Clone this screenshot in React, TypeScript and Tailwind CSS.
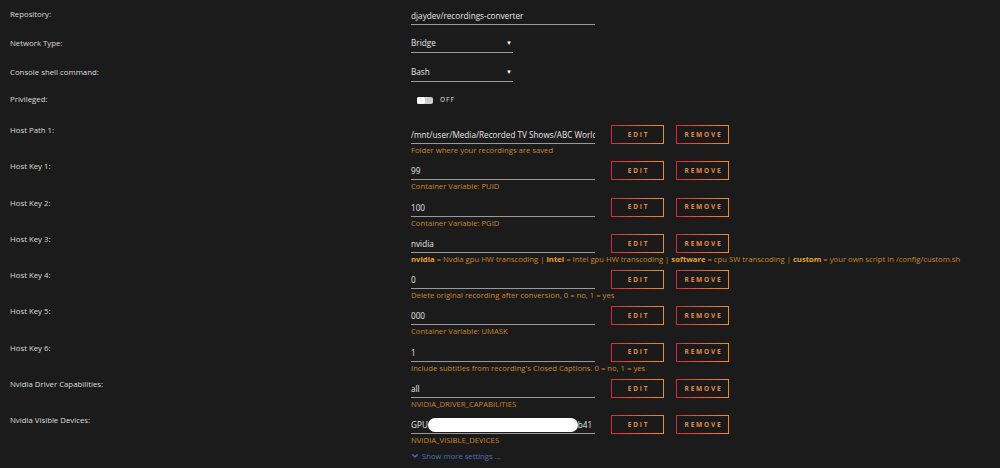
import { ReactNode } from 'react';

interface HostRow {
  label: string;
  value: string;
  hint: ReactNode;
  masked?: boolean;
}

const font = "font-['Open_Sans',_'Liberation_Sans',_sans-serif]";

function B({ children }: { children: ReactNode }) {
  return <span className="font-bold text-[#e4a030]">{children}</span>;
}

const rows: HostRow[] = [
  { label: 'Host Path 1:', value: '/mnt/user/Media/Recorded TV Shows/ABC World News Tonight', hint: 'Folder where your recordings are saved' },
  { label: 'Host Key 1:', value: '99', hint: 'Container Variable: PUID' },
  { label: 'Host Key 2:', value: '100', hint: 'Container Variable: PGID' },
  {
    label: 'Host Key 3:',
    value: 'nvidia',
    hint: (
      <>
        <B>nvidia</B> = Nvdia gpu HW transcoding | <B>intel</B> = Intel gpu HW transcoding | <B>software</B> = cpu SW transcoding | <B>custom</B> = your own script in /config/custom.sh
      </>
    ),
  },
  { label: 'Host Key 4:', value: '0', hint: 'Delete original recording after conversion, 0 = no, 1 = yes' },
  { label: 'Host Key 5:', value: '000', hint: 'Container Variable: UMASK' },
  { label: 'Host Key 6:', value: '1', hint: "Include subtitles from recording's Closed Captions. 0 = no, 1 = yes" },
  { label: 'Nvidia Driver Capabilities:', value: 'all', hint: 'NVIDIA_DRIVER_CAPABILITIES' },
  { label: 'Nvidia Visible Devices:', value: '', hint: 'NVIDIA_VISIBLE_DEVICES', masked: true },
];

function GradButton({ children }: { children: ReactNode }) {
  return (
    <div className="h-[19px] w-[53px] bg-gradient-to-r from-[#d4283a] to-[#f08a30] p-[1px]">
      <div className="flex h-full w-full items-center justify-center bg-[#1b1a1a] pl-[2px] text-[6.5px] font-bold tracking-[1.8px] text-[#e08a4a]">
        {children}
      </div>
    </div>
  );
}

function Label({ children }: { children: ReactNode }) {
  return <div className="w-[411px] shrink-0 pl-[10px] text-[7.8px] text-[#dcdcdc]">{children}</div>;
}

function Field({ value, width = 'w-[184px]' }: { value: string; width?: string }) {
  return (
    <input
      readOnly
      value={value}
      className={`h-[20px] ${width} shrink-0 border-b border-[#9a9a9a] bg-transparent pt-[2px] text-[8.2px] text-[#e4e4e4] outline-none`}
    />
  );
}

export default function App() {
  return (
    <div className={`h-[468px] w-[1000px] overflow-hidden bg-[#1c1b1b] ${font}`}>
      {/* Repository */}
      <div className="flex h-[29px] items-center">
        <Label>Repository:</Label>
        <Field value="djaydev/recordings-converter" />
      </div>

      {/* Network Type */}
      <div className="flex h-[29px] items-center">
        <Label>Network Type:</Label>
        <div className="flex h-[19px] w-[102px] items-center justify-between border-b border-[#9a9a9a] pr-[1px] text-[8.2px] text-[#e4e4e4]">
          Bridge
          <span className="text-[6px] text-white">▼</span>
        </div>
      </div>

      {/* Console shell */}
      <div className="flex h-[29px] items-center">
        <Label>Console shell command:</Label>
        <div className="flex h-[19px] w-[102px] items-center justify-between border-b border-[#9a9a9a] pr-[1px] text-[8.2px] text-[#e4e4e4]">
          Bash
          <span className="text-[6px] text-white">▼</span>
        </div>
      </div>

      {/* Privileged */}
      <div className="mb-[9px] flex h-[26px] items-center">
        <Label>Privileged:</Label>
        <div className="flex items-center gap-[7px] pl-[6px]">
          <div className="flex h-[7px] w-[16px] items-center rounded-[2px] bg-[#cfcfcf]">
            <div className="h-[7px] w-[8px] rounded-[2px] bg-white" />
          </div>
          <span className="text-[6.5px] font-semibold tracking-[1px] text-[#bdbdbd]">OFF</span>
        </div>
      </div>

      {/* Host rows */}
      {rows.map(row => (
        <div key={row.label} className="flex h-[36.3px]">
          <div className="pt-[3px]">
            <Label>{row.label}</Label>
          </div>
          <div className="flex flex-col pt-[2px]">
            <div className="flex items-start">
              {row.masked ? (
                <div className="flex h-[20px] w-[184px] shrink-0 items-center border-b border-[#9a9a9a] pt-[2px] text-[8.2px] text-[#e4e4e4]">
                  GPU
                  <span className="inline-block h-[14px] w-[150px] rounded-full bg-white" />
                  b41
                </div>
              ) : (
                <Field value={row.value} />
              )}
              <div className="ml-[16px] mt-[1px] flex gap-[12px]">
                <GradButton>EDIT</GradButton>
                <GradButton>REMOVE</GradButton>
              </div>
            </div>
            <div className="whitespace-nowrap pt-[1px] text-[7.7px] leading-[10px] text-[#c8862a]">
              {row.hint}
            </div>
          </div>
        </div>
      ))}

      {/* Show more */}
      <div className="flex items-center gap-[3px] pl-[411px] pt-[2px] text-[7.7px] text-[#4a6fb8]">
        <svg width="8" height="8" viewBox="0 0 24 24" fill="none" stroke="currentColor" strokeWidth={4} strokeLinecap="round" strokeLinejoin="round">
          <path d="M5 8l7 7 7-7" />
        </svg>
        Show more settings ...
      </div>
    </div>
  );
}
